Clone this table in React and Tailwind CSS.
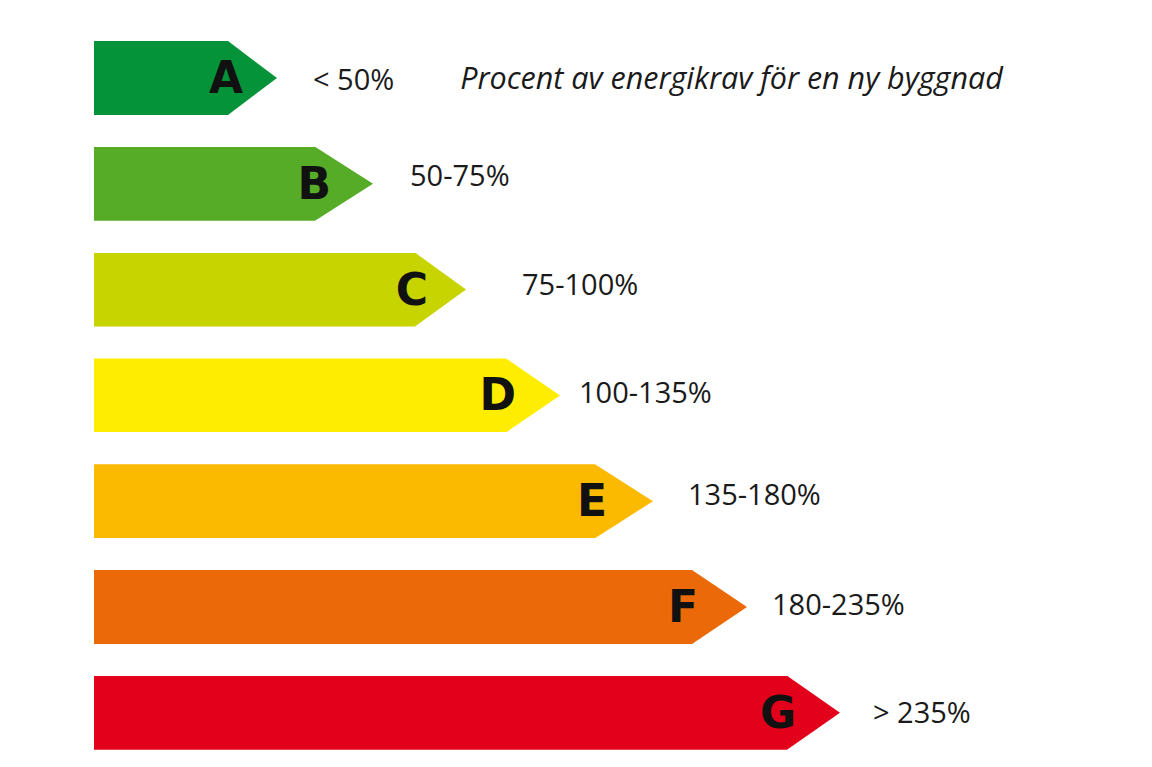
import React from 'react';

const bars = [
  { letter: 'A', label: '< 50%', width: 'w-[183px]', cut: '[clip-path:polygon(0_0,calc(100%-49px)_0,100%_50%,calc(100%-49px)_100%,0_100%)]', color: 'bg-[#05933a]', pad: 'pr-[34px]', gap: 'ml-[36px]', shift: 'mt-0' },
  { letter: 'B', label: '50-75%', width: 'w-[279px]', cut: '[clip-path:polygon(0_0,calc(100%-58px)_0,100%_50%,calc(100%-58px)_100%,0_100%)]', color: 'bg-[#56ab27]', pad: 'pr-[42px]', gap: 'ml-[37px]', shift: '-mt-[18px]' },
  { letter: 'C', label: '75-100%', width: 'w-[372px]', cut: '[clip-path:polygon(0_0,calc(100%-51px)_0,100%_50%,calc(100%-51px)_100%,0_100%)]', color: 'bg-[#c8d400]', pad: 'pr-[38px]', gap: 'ml-[56px]', shift: '-mt-[13px]' },
  { letter: 'D', label: '100-135%', width: 'w-[466px]', cut: '[clip-path:polygon(0_0,calc(100%-54px)_0,100%_50%,calc(100%-54px)_100%,0_100%)]', color: 'bg-[#ffed00]', pad: 'pr-[44px]', gap: 'ml-[19px]', shift: '-mt-[8px]' },
  { letter: 'E', label: '135-180%', width: 'w-[559px]', cut: '[clip-path:polygon(0_0,calc(100%-58px)_0,100%_50%,calc(100%-58px)_100%,0_100%)]', color: 'bg-[#fbba00]', pad: 'pr-[46px]', gap: 'ml-[35px]', shift: '-mt-[16px]' },
  { letter: 'F', label: '180-235%', width: 'w-[653px]', cut: '[clip-path:polygon(0_0,calc(100%-55px)_0,100%_50%,calc(100%-55px)_100%,0_100%)]', color: 'bg-[#eb6909]', pad: 'pr-[49px]', gap: 'ml-[25px]', shift: '-mt-[6px]' },
  { letter: 'G', label: '> 235%', width: 'w-[746px]', cut: '[clip-path:polygon(0_0,calc(100%-53px)_0,100%_50%,calc(100%-53px)_100%,0_100%)]', color: 'bg-[#e2001a]', pad: 'pr-[44px]', gap: 'ml-[33px]', shift: '-mt-[2px]' },
];

export default function App() {
  return (
    <div className="w-[1152px] h-[767px] bg-white overflow-hidden">
      <div className="flex flex-col gap-[31.8px] pt-[41px] pl-[94px]">
        {bars.map((b) => (
          <div key={b.letter} className="flex items-center h-[74px]">
            <div className={`h-full shrink-0 flex items-center justify-end ${b.width} ${b.cut} ${b.color} ${b.pad}`}>
              <span className="font-['DejaVu_Sans',sans-serif] font-bold text-[44px] leading-none text-[#111]">
                {b.letter}
              </span>
            </div>
            <span className={`font-['Open_Sans',sans-serif] text-[29px] leading-none text-[#1a1a1a] whitespace-nowrap ${b.gap} ${b.shift}`}>
              {b.label}
            </span>
            {b.letter === 'A' && (
              <span className="ml-[66px] -mt-[2px] font-['Open_Sans',sans-serif] italic text-[30.5px] leading-none text-[#1a1a1a] whitespace-nowrap">
                Procent av energikrav för en ny byggnad
              </span>
            )}
          </div>
        ))}
      </div>
    </div>
  );
}
